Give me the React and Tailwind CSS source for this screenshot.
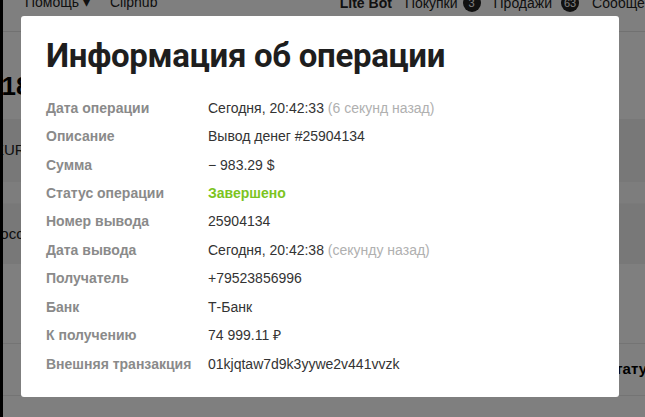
import React from "react";

const rows = [
  ["Дата операции", <>Сегодня, 20:42:33 <span className="text-[#b0b0b0]">(6 секунд назад)</span></>],
  ["Описание", "Вывод денег #25904134"],
  ["Сумма", "− 983.29 $"],
  ["Статус операции", <span className="font-bold text-[#7cc41f]">Завершено</span>],
  ["Номер вывода", "25904134"],
  ["Дата вывода", <>Сегодня, 20:42:38 <span className="text-[#b0b0b0]">(секунду назад)</span></>],
  ["Получатель", "+79523856996"],
  ["Банк", "Т-Банк"],
  ["К получению", "74 999.11 ₽"],
  ["Внешняя транзакция", "01kjqtaw7d9k3yywe2v441vvzk"],
];

export default function App() {
  return (
    <div className="relative w-[645px] h-[417px] overflow-hidden bg-white font-['Liberation_Sans',Arial,sans-serif]">
      {/* background page */}
      <div className="flex h-full">
        <div className="w-[3px] bg-black" />
        <div className="flex-1 flex flex-col overflow-hidden">
          <div className="h-[40px] shrink-0 -mt-[8px] flex items-start justify-between border-b border-[#e2e2e2] text-[14px] text-[#222] leading-[16px] pt-[2px]">
            <div className="flex items-center pl-[22px]">
              <span>Помощь ▾</span>
              <span className="ml-[20px]">Cliphub</span>
            </div>
            <div className="flex items-center whitespace-nowrap -mr-[23px]">
              <span className="font-bold">Lite Bot</span>
              <span className="ml-[13px]">Покупки</span>
              <span className="ml-[5px] w-[18px] h-[18px] rounded-full bg-[#222] text-white text-[11px] flex items-center justify-center">3</span>
              <span className="ml-[13px]">Продажи</span>
              <span className="ml-[9px] w-[18px] h-[18px] rounded-full bg-[#222] text-white text-[11px] flex items-center justify-center">63</span>
              <span className="ml-[13px]">Сообщения</span>
            </div>
          </div>
          <div className="h-[87px] shrink-0 flex items-center pt-[22px] -ml-[16px] text-[26px] font-bold text-black">318</div>
          <div className="h-[63px] shrink-0 flex items-center bg-[#f0f0f0] -ml-[9px] text-[15px] text-[#222]">EUR</div>
          <div className="h-[22px] shrink-0 bg-[#fafafa] border-b border-[#f4f4f4]" />
          <div className="h-[60px] shrink-0 flex items-center bg-[#f0f0f0] -ml-[12px] text-[15px] text-[#222]">Россия</div>
          <div className="h-[80px] shrink-0 border-b border-[#e8e8e8]" />
          <div className="h-[52px] shrink-0 flex items-center justify-end text-[15px] font-bold text-black -mr-[10px] border-b border-[#e8e8e8]">Статус</div>
        </div>
      </div>

      {/* overlay */}
      <div className="absolute inset-0 bg-black/50" />

      {/* modal */}
      <div className="absolute left-[21px] top-[16px] w-[598px] h-[381px] bg-white rounded-[3px] px-[25px] pt-[20px]">
        <h1 className="text-[33px] leading-[40px] font-bold text-[#1e1e1e] font-['Roboto',sans-serif] tracking-[-0.3px]">
          Информация об операции
        </h1>
        <div className="mt-[18px] flex flex-col">
          {rows.map(([label, value], i) => (
            <div key={i} className="flex items-center h-[28.45px] text-[14px]">
              <div className="w-[162px] font-bold text-[#8a8a8a]">{label}</div>
              <div className="text-[#333]">{value}</div>
            </div>
          ))}
        </div>
      </div>
    </div>
  );
}
